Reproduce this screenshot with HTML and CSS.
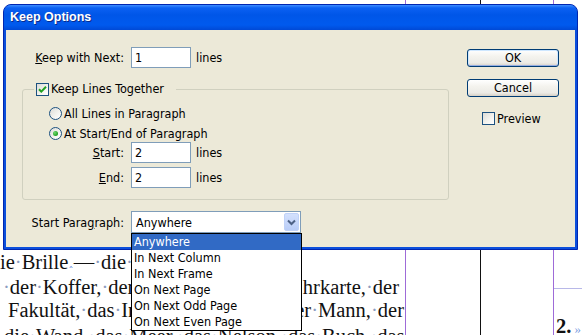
FILE: index.html
```html
<!DOCTYPE html>
<html>
<head>
<meta charset="utf-8">
<link rel="stylesheet" href="styles.css">
</head>
<body>
<div class="doc">
  <div class="col text-col">
    <div class="line l1">ie<span class="sp">·</span>Brille<span class="caret">‸</span>—<span class="sp">·</span>die<span class="sp">·</span>Uhr</div>
    <div class="line split l2"><span><span class="sp">·</span>der<span class="sp">·</span>Koffer,<span class="sp">·</span>der<span class="sp">·</span>Schirm</span><span>hrkarte,<span class="sp">·</span>der</span></div>
    <div class="line split l3"><span>Fakultät,<span class="sp">·</span>das<span class="sp">·</span>Institut</span><span>er<span class="sp">·</span>Mann,<span class="sp">·</span>der</span></div>
    <div class="line l4">die<span class="sp">·</span>Wand,<span class="sp">·</span>das<span class="sp">·</span>Meer,<span class="sp">·</span>das<span class="sp">·</span>Nelson,<span class="sp">·</span>das<span class="sp">·</span>Buch,<span class="sp">·</span>das</div>
  </div>
  <div class="col gutter"></div>
  <div class="col col3"></div>
  <div class="col col4">
    <div class="rule"></div>
    <div class="num"><b>2.</b><span class="quote">»</span></div>
  </div>
</div>

<div class="dialog">
  <div class="titlebar">Keep Options</div>
  <div class="client">
    <div class="main">
      <div class="row r-keep">
        <span class="lbl w1"><u>K</u>eep with Next:</span>
        <span class="field">1</span>
        <span class="unit">lines</span>
      </div>
      <fieldset class="group">
        <legend><span class="check on"><svg width="9" height="9" viewBox="0 0 9 9"><path d="M1 4.2 L3.3 6.6 L8 1.8" fill="none" stroke="#21A121" stroke-width="2"/></svg></span>Keep Lines Together</legend>
        <div class="opt o1"><span class="radio"></span>All Lines in Paragraph</div>
        <div class="opt o2"><span class="radio on"></span>At Start/End of Paragraph</div>
        <div class="row r-start">
          <span class="lbl w2"><u>S</u>tart:</span>
          <span class="field">2</span>
          <span class="unit">lines</span>
        </div>
        <div class="row r-end">
          <span class="lbl w2"><u>E</u>nd:</span>
          <span class="field">2</span>
          <span class="unit">lines</span>
        </div>
      </fieldset>
      <div class="row r-para">
        <span class="lbl w1">Start Para<u>g</u>raph:</span>
        <div class="select">
          <span class="sel-text">Anywhere</span>
          <span class="drop-btn"><svg width="9" height="7" viewBox="0 0 9 7"><path d="M1 1.5 L4.5 5 L8 1.5" fill="none" stroke="#4D6185" stroke-width="2"/></svg></span>
        </div>
      </div>
    </div>
    <div class="side">
      <div class="btn default">OK</div>
      <div class="btn">Cancel</div>
      <div class="preview"><span class="check"></span>Preview</div>
    </div>
  </div>
</div>

<ul class="listbox">
  <li class="sel">Anywhere</li>
  <li>In Next Column</li>
  <li>In Next Frame</li>
  <li>On Next Page</li>
  <li>On Next Odd Page</li>
  <li>On Next Even Page</li>
</ul>
</body>
</html>
```
FILE: styles.css
```css
html, body {
  margin: 0;
  padding: 0;
}
body {
  width: 582px;
  height: 335px;
  overflow: hidden;
  background: #fff;
  position: relative;
}

/* ---------- document behind ---------- */
.doc {
  display: grid;
  grid-template-columns: 406px 75px 73px 1fr;
  height: 335px;
  font-family: "Liberation Serif", serif;
  font-size: 20.5px;
  color: #111;
}
.col { box-sizing: border-box; }
.text-col {
  border-right: 1px solid #9E6BD8;
  padding-top: 251px;
  overflow: hidden;
}
.gutter { border-right: 1px solid #111; }
.col3 { border-right: 1px solid #9E6BD8; }
.col4 {
  padding-top: 288px;
}
.rule {
  height: 1px;
  background: #B8B8E8;
}
.num {
  margin-top: 27px;
  padding-left: 2px;
  line-height: 20px;
  white-space: nowrap;
}
.num b { font-weight: bold; }
.quote { color: #7A9CE0; font-size: 13px; margin-left: 3px; }

.line {
  height: 22px;
  line-height: 22px;
  white-space: nowrap;
}
.l1 { padding-left: 0; }
.l2 { margin-top: 3px; padding-left: 3px; }
.l3 { margin-top: 1px; padding-left: 8px; }
.l4 { margin-top: 4px; padding-left: 4px; text-align: justify; text-align-last: justify; width: 396px; }
.split {
  display: flex;
  justify-content: space-between;
  width: 396px;
}
.sp { color: #8C9CC0; }
.caret { color: #5B82D8; font-family: "DejaVu Sans", sans-serif; font-size: 10px; vertical-align: 4px; margin: 0 1px; }

/* ---------- dialog ---------- */
.dialog {
  position: absolute;
  left: 3px;
  top: 4px;
  width: 575px;
  height: 246px;
  box-sizing: border-box;
  border: 1px solid #0026B0;
  border-radius: 8px 8px 0 0;
  background: #0B4FDC;
  display: flex;
  flex-direction: column;
  font-family: "DejaVu Sans Condensed", "DejaVu Sans", sans-serif;
  font-stretch: condensed;
  font-size: 12.5px;
  color: #000;
}
.titlebar {
  height: 25px;
  border-radius: 7px 7px 0 0;
  background: linear-gradient(#3D8DFF 0, #0B60F2 3px, #0056E8 40%, #005AEE 80%, #0049D6 100%);
  color: #fff;
  font-family: "Liberation Sans", sans-serif;
  font-stretch: normal;
  font-weight: bold;
  font-size: 12.5px;
  line-height: 25px;
  padding-left: 6px;
  text-shadow: 1px 1px 0 #0A2A8A;
}
.client {
  margin: 0 2px 2px;
  height: 217px;
  background: #ECE9D8;
  box-sizing: border-box;
  padding: 17px 0 0 16px;
  display: flex;
}
.main {
  width: 427px;
}
.row {
  display: flex;
  align-items: center;
  height: 21px;
}
.lbl {
  text-align: right;
  margin-right: 7px;
  white-space: nowrap;
}
.w1 { width: 102px; }
.w2 { width: 101px; }
.field {
  box-sizing: border-box;
  width: 60px;
  height: 21px;
  border: 1px solid #7F9DB9;
  background: #fff;
  padding-left: 3px;
  line-height: 19px;
}
.unit { margin-left: 5px; }

.group {
  margin: 14px 0 0;
  padding: 7px 0 11px;
  border: 1px solid #D0D0BF;
  border-radius: 3px;
  min-width: 0;
}
.group legend {
  margin-left: 11px;
  padding: 0 12px 0 2px;
  height: 14px;
  line-height: 14px;
  display: flex;
  align-items: center;
}
.check {
  box-sizing: border-box;
  width: 13px;
  height: 13px;
  border: 1px solid #1C5180;
  background: linear-gradient(135deg, #DCDCD7 0%, #F4F4F0 60%, #FFFFFF 100%);
  margin-right: 2px;
  display: inline-flex;
  align-items: center;
  justify-content: center;
  flex: none;
}
.opt {
  display: flex;
  align-items: center;
  height: 20px;
  padding-left: 26px;
}
.radio {
  box-sizing: border-box;
  width: 13px;
  height: 13px;
  border: 1px solid #1C5180;
  border-radius: 50%;
  background: linear-gradient(135deg, #DCDCD7 0%, #F4F4F0 60%, #FFFFFF 100%);
  margin-right: 2px;
  display: inline-flex;
  align-items: center;
  justify-content: center;
  flex: none;
}
.radio.on::after {
  content: "";
  width: 5px;
  height: 5px;
  border-radius: 50%;
  background: radial-gradient(circle at 35% 35%, #6ED86E, #21A121 70%);
}
.r-start { margin-top: -1px; }
.r-end { margin-top: 4px; }
.r-para { margin-top: 11px; height: 22px; }
.select {
  box-sizing: border-box;
  width: 170px;
  height: 22px;
  border: 1px solid #7F9DB9;
  background: #fff;
  display: flex;
  align-items: center;
  justify-content: space-between;
  padding: 0 1px 0 4px;
}
.drop-btn {
  width: 15px;
  height: 18px;
  border-radius: 2px;
  background: linear-gradient(#D4E1FD, #B9CDF8);
  border: 1px solid #C0D2F8;
  box-sizing: border-box;
  display: flex;
  align-items: center;
  justify-content: center;
}

.side {
  margin-left: 18px;
  padding-top: 2px;
  display: flex;
  flex-direction: column;
  align-items: flex-start;
}
.btn {
  box-sizing: border-box;
  width: 92px;
  height: 18px;
  border: 1px solid #003C74;
  border-radius: 3px;
  background: linear-gradient(#FFFFFF 0%, #F4F3EE 40%, #ECEBE6 80%, #D6D0C5 100%);
  text-align: center;
  line-height: 16px;
}
.btn.default {
  box-shadow: inset 0 -1px 0 #97AEE2, inset 1px 0 0 #CEE7FF, inset -1px 0 0 #CEE7FF, inset 0 1px 0 #CEE7FF;
}
.btn + .btn { margin-top: 12px; }
.preview {
  margin-top: 15px;
  margin-left: 15px;
  display: flex;
  align-items: center;
  height: 13px;
}

/* ---------- open dropdown ---------- */
.listbox {
  position: absolute;
  left: 131px;
  top: 233px;
  width: 171px;
  margin: 0;
  padding: 0;
  list-style: none;
  box-sizing: border-box;
  border: 1px solid #000;
  background: #fff;
  font-family: "DejaVu Sans Condensed", "DejaVu Sans", sans-serif;
  font-stretch: condensed;
  font-size: 12.5px;
}
.listbox li {
  height: 16px;
  line-height: 16px;
  padding-left: 2px;
  white-space: nowrap;
}
.listbox li.sel {
  background: #316AC5;
  color: #fff;
}
```
